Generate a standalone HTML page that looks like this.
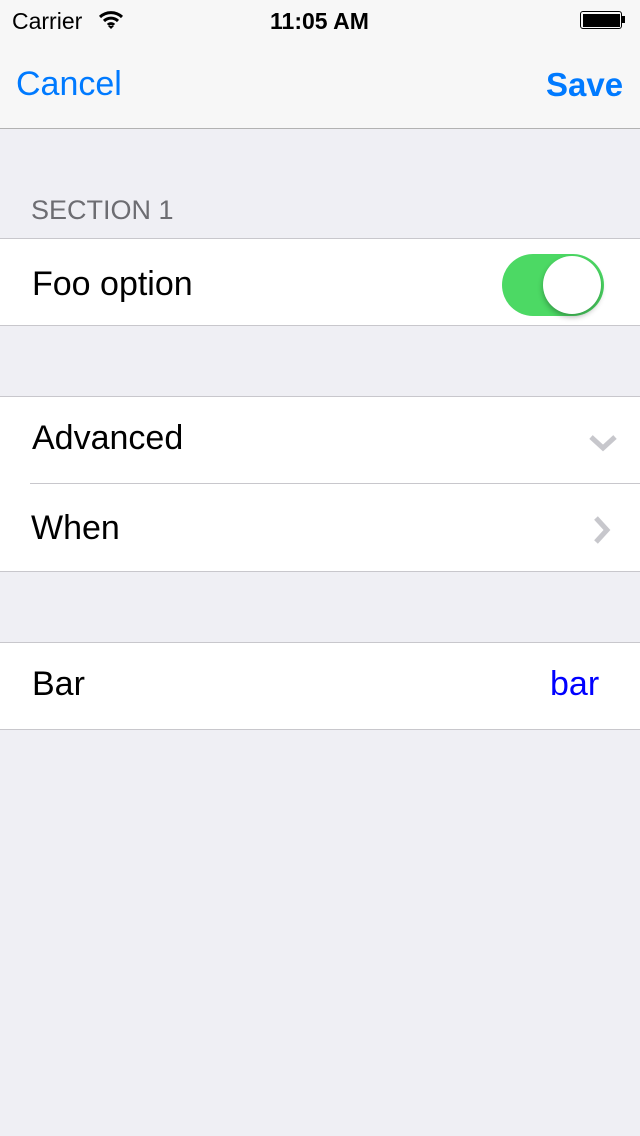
<!DOCTYPE html><html><head><style>
body{margin:0;width:640px;height:1136px;background:#efeff4;font-family:"Liberation Sans",sans-serif;position:relative;overflow:hidden}
.a{position:absolute}
.row{position:absolute;left:0;width:640px;background:#fff}
.line{position:absolute;height:1px;background:#c8c7cc}
.t{position:absolute;font-size:34px;color:#000;line-height:1}
</style></head><body>
<div class="a" style="left:0;top:0;width:640px;height:128px;background:#f7f7f7"></div>
<div class="line" style="left:0;top:128px;width:640px;background:#b2b2b2"></div>
<div class="a" style="left:12px;top:8px;font-size:23px">Carrier</div>
<svg class="a" style="left:98px;top:10px" width="26" height="20" viewBox="0 0 26 20"><path d="M2 7a16 16 0 0 1 22 0M6 11a10 10 0 0 1 14 0M10 15a4 4 0 0 1 6 0" stroke="#000" stroke-width="3" fill="none"/><path d="M13 19l-3-3h6z" fill="#000"/></svg>
<div class="a" style="left:270px;top:8px;font-size:23px;font-weight:bold">11:05 AM</div>
<div class="a" style="left:580px;top:11px;width:42px;height:18px;border:1.5px solid #000;border-radius:3px;box-sizing:border-box;padding:1.5px"><div style="width:100%;height:100%;background:#000"></div></div>
<div class="a" style="left:622px;top:16px;width:3px;height:7px;background:#000"></div>
<div class="a" style="left:16px;top:65px;font-size:34px;color:#007aff">Cancel</div>
<div class="a" style="left:546px;top:66px;font-size:33px;color:#007aff;font-weight:bold">Save</div>
<div class="a" style="left:31px;top:195px;font-size:27px;color:#6d6d72">SECTION 1</div>
<div class="row" style="top:238px;height:87px"></div>
<div class="line" style="left:0;top:238px;width:640px"></div>
<div class="line" style="left:0;top:325px;width:640px"></div>
<div class="t" style="left:32px;top:267px">Foo option</div>
<div class="a" style="left:502px;top:254px;width:102px;height:62px;border-radius:31px;background:#4cd964"></div>
<div class="a" style="left:543px;top:256px;width:58px;height:58px;border-radius:50%;background:#fff;box-shadow:0 3px 6px rgba(0,0,0,.3)"></div>
<div class="row" style="top:396px;height:175px"></div>
<div class="line" style="left:0;top:396px;width:640px"></div>
<div class="line" style="left:30px;top:483px;width:610px"></div>
<div class="line" style="left:0;top:571px;width:640px"></div>
<div class="t" style="left:32px;top:421px">Advanced</div>
<svg class="a" style="left:588px;top:432px" width="30" height="20"><path d="M3 5l12 11 12-11" stroke="#c7c7cc" stroke-width="5" fill="none"/></svg>
<div class="t" style="left:31px;top:511px">When</div>
<svg class="a" style="left:592px;top:515px" width="20" height="30"><path d="M4 3l11 12-11 12" stroke="#c7c7cc" stroke-width="5" fill="none"/></svg>
<div class="row" style="top:642px;height:87px"></div>
<div class="line" style="left:0;top:642px;width:640px"></div>
<div class="line" style="left:0;top:729px;width:640px"></div>
<div class="t" style="left:32px;top:667px">Bar</div>
<div class="t" style="left:550px;top:667px;color:#0000ff">bar</div>
</body></html>
